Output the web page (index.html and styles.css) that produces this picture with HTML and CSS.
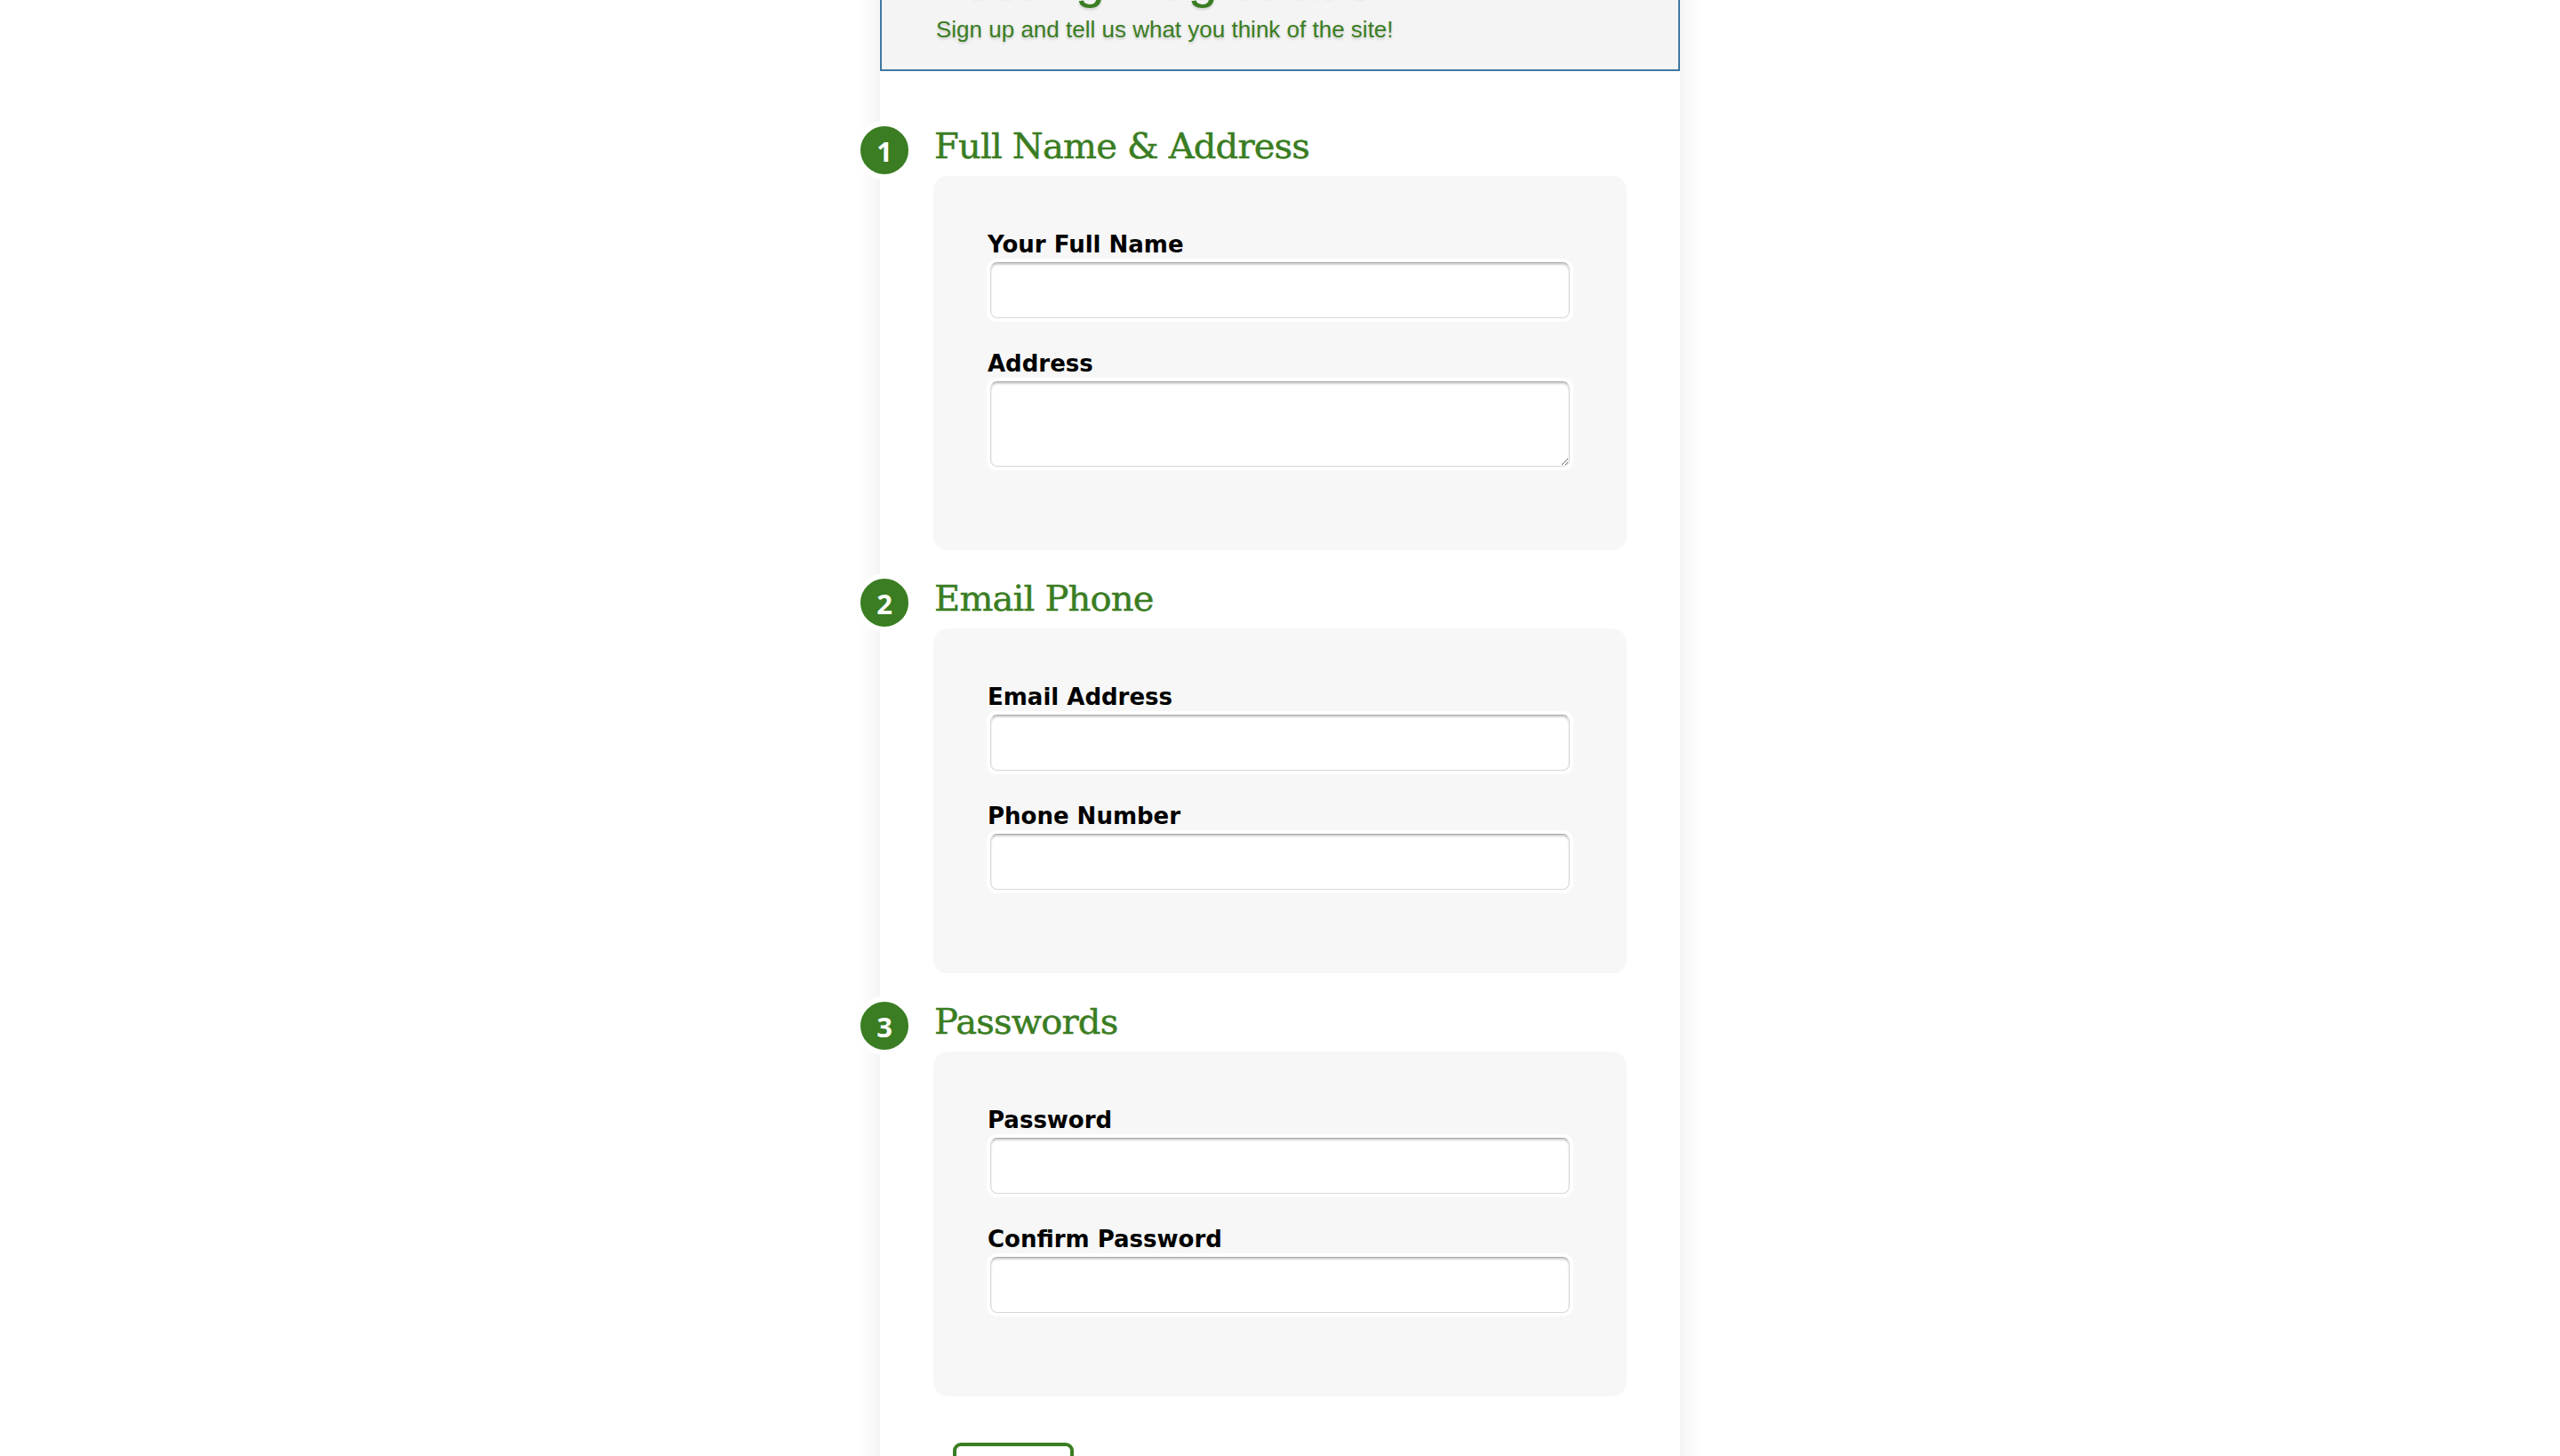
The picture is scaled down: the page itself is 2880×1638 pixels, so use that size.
FILE: index.html
```html
<!DOCTYPE html>
<html lang="en">
<head>
<meta charset="utf-8">
<title>Registration</title>
<link rel="stylesheet" href="styles.css">
</head>
<body>
<div class="page">
  <header class="header">
    <h1 class="title">Testing Registration</h1>
    <p class="subtitle">Sign up and tell us what you think of the site!</p>
  </header>
  <form class="form">
    <section class="step">
      <h2 class="step-title"><span class="badge">1</span>Full Name &amp; Address</h2>
      <div class="step-box">
        <label class="field-label" for="name">Your Full Name</label>
        <input class="field" id="name" type="text">
        <label class="field-label" for="address">Address</label>
        <textarea class="field field-area" id="address"></textarea>
      </div>
    </section>
    <section class="step">
      <h2 class="step-title"><span class="badge">2</span>Email Phone</h2>
      <div class="step-box">
        <label class="field-label" for="email">Email Address</label>
        <input class="field" id="email" type="email">
        <label class="field-label" for="phone">Phone Number</label>
        <input class="field" id="phone" type="tel">
      </div>
    </section>
    <section class="step">
      <h2 class="step-title"><span class="badge">3</span>Passwords</h2>
      <div class="step-box">
        <label class="field-label" for="pw">Password</label>
        <input class="field" id="pw" type="password">
        <label class="field-label" for="pw2">Confirm Password</label>
        <input class="field" id="pw2" type="password">
      </div>
    </section>
    <div class="actions">
      <button class="submit" type="button"></button>
    </div>
  </form>
</div>
</body>
</html>
```
FILE: styles.css
```css
html, body {
  margin: 0;
  padding: 0;
  background: #ffffff;
}

body {
  overflow: hidden;
}

.page {
  width: 900px;
  margin: 0 auto;
  min-height: 1800px;
  background: #ffffff;
  box-shadow: 0 0 30px rgba(0, 0, 0, 0.09);
}

.header {
  margin-top: -55px;
  border: 2px solid #3f78a0;
  background: #f4f4f4;
  padding: 0 0 30px 61px;
}

.title {
  margin: 0;
  font-family: "Liberation Sans", Arial, sans-serif;
  font-weight: normal;
  font-size: 60px;
  line-height: 60px;
  color: #3a7d22;
  text-shadow: 0 2px 3px rgba(0, 0, 0, 0.15);
}

.subtitle {
  margin: 11px 0 0;
  font-family: "Liberation Sans", Arial, sans-serif;
  font-size: 26px;
  line-height: 30px;
  color: #3a7d22;
  text-shadow: 0 2px 3px rgba(0, 0, 0, 0.18);
}

.form {
  padding: 30px 60px 0 60px;
}

.step {
  margin-top: 30px;
}

.step-title {
  position: relative;
  margin: 0 0 10px;
  font-family: "DejaVu Serif", "Liberation Serif", serif;
  font-weight: normal;
  font-size: 40px;
  line-height: 48px;
  letter-spacing: -0.8px;
  color: #3a7d22;
  -webkit-text-stroke: 0.5px #3a7d22;
  padding-left: 1px;
}

.badge {
  position: absolute;
  left: -88px;
  top: -4px;
  width: 54px;
  height: 54px;
  border: 6px solid #ffffff;
  border-radius: 50%;
  background: #3a7d22;
  color: #ffffff;
  -webkit-text-stroke: 0;
  font-family: "Open Sans", "DejaVu Sans", sans-serif;
  font-weight: 700;
  font-size: 31px;
  line-height: 56px;
  text-align: center;
  letter-spacing: 0;
}

.step-box {
  display: flex;
  flex-direction: column;
  align-items: flex-start;
  background: #f7f7f7;
  border-radius: 16px;
  padding: 62px 60px 94px 61px;
}

.field-label {
  display: block;
  font-family: "DejaVu Sans", Verdana, sans-serif;
  font-weight: bold;
  font-size: 26px;
  line-height: 30px;
  color: #000000;
  margin-bottom: 5px;
}

.field {
  box-sizing: border-box;
  display: block;
  width: 652px;
  height: 63px;
  margin: 0 0 36px 3px;
  border: 1px solid #d8d8d8;
  border-top-color: #a8a8a8;
  border-radius: 8px;
  background: #ffffff;
  box-shadow: inset 0 2px 2px rgba(0, 0, 0, 0.18), 0 0 0 4px #ffffff;
  font-size: 24px;
  padding: 0 10px;
  outline: none;
}

.field:last-child {
  margin-bottom: 0;
}

.field-area {
  height: 96px;
  resize: both;
}

.actions {
  padding: 52px 0 0 22px;
}

.submit {
  width: 136px;
  height: 60px;
  border: 4px solid #3a7d22;
  border-radius: 9px;
  background: #ffffff;
}
```
